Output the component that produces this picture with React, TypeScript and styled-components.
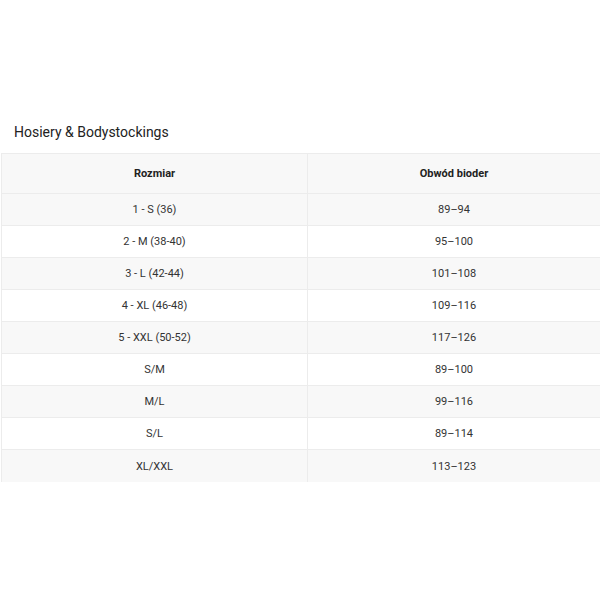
import React from "react";
import styled, { createGlobalStyle } from "styled-components";

const Global = createGlobalStyle`
  html, body { margin: 0; padding: 0; background: #fff; }
  body { font-family: Roboto, "Liberation Sans", sans-serif; color: #333; }
`;

const Page = styled.div`
  width: 600px;
  padding-top: 124px;
`;

const Title = styled.h2`
  margin: 0 0 13px 14px;
  font-size: 14px;
  font-weight: 400;
  line-height: 16px;
  color: #222;
`;

const Table = styled.div`
  margin-left: 1px;
  width: 598px;
  border-top: 1px solid #ececec;
  border-left: 1px solid #ececec;
  border-right: 1px solid #ececec;
  display: grid;
  grid-template-columns: 306px 1fr;
`;

const Cell = styled.div<{ $head?: boolean; $shade?: boolean; $last?: boolean; $first?: boolean }>`
  height: ${(p) => (p.$head ? 39 : p.$last ? 32 : 31)}px;
  display: flex;
  align-items: center;
  justify-content: center;
  background: ${(p) => (p.$shade ? "#f8f8f8" : "#fff")};
  border-bottom: ${(p) => (p.$last ? "none" : "1px solid #ececec")};
  border-right: ${(p) => (p.$first ? "1px solid #ececec" : "none")};
  font-size: 11px;
  font-weight: ${(p) => (p.$head ? 700 : 400)};
  color: ${(p) => (p.$head ? "#222" : "#333")};
`;

const rows: [string, string][] = [
  ["1 - S (36)", "89–94"],
  ["2 - M (38-40)", "95–100"],
  ["3 - L (42-44)", "101–108"],
  ["4 - XL (46-48)", "109–116"],
  ["5 - XXL (50-52)", "117–126"],
  ["S/M", "89–100"],
  ["M/L", "99–116"],
  ["S/L", "89–114"],
  ["XL/XXL", "113–123"],
];

export default function App() {
  return (
    <>
      <Global />
      <Page>
        <Title>Hosiery &amp; Bodystockings</Title>
        <Table>
          <Cell $head $shade $first>Rozmiar</Cell>
          <Cell $head $shade>Obwód bioder</Cell>
          {rows.map(([a, b], i) => (
            <React.Fragment key={a}>
              <Cell $shade={i % 2 === 0} $first $last={i === rows.length - 1}>{a}</Cell>
              <Cell $shade={i % 2 === 0} $last={i === rows.length - 1}>{b}</Cell>
            </React.Fragment>
          ))}
        </Table>
      </Page>
    </>
  );
}
